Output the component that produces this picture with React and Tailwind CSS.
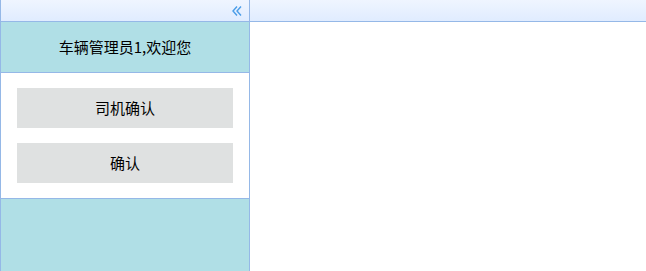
const font = { fontFamily: '"Microsoft YaHei", "Noto Sans CJK SC", sans-serif' }

const Collapse = () => (
  <svg width="12" height="12" viewBox="0 0 12 12" fill="none" stroke="#4a9de8" strokeWidth="1.4">
    <path d="M6 1.5 L2 6 L6 10.5" />
    <path d="M10 1.5 L6 6 L10 10.5" />
  </svg>
)

const App = () => {
  const actions = ['司机确认', '确认']

  return (
    <div className="flex h-[271px] w-[646px] overflow-hidden bg-white text-[15px] text-black" style={font}>
      <div className="flex w-[250px] flex-col border-x border-[#95B8E7]">
        <div className="flex h-[22px] shrink-0 items-center justify-end border-b border-[#95B8E7] bg-gradient-to-b from-[#EFF5FF] to-[#E0ECFF] pr-[6px]">
          <Collapse />
        </div>
        <div className="flex flex-1 flex-col bg-[#B0DFE6]">
          <div className="flex h-[50px] items-center justify-center">车辆管理员1,欢迎您</div>
          <div className="flex flex-col gap-[15px] border-y border-[#95B8E7] bg-white pb-[15px] pl-[16px] pt-[15px]">
            {actions.map((label) => (
              <button key={label} className="h-[40px] w-[216px] bg-[#DFE1E1] text-[15px]">
                {label}
              </button>
            ))}
          </div>
        </div>
      </div>
      <div className="flex flex-1 flex-col">
        <div className="h-[22px] shrink-0 border-b border-[#95B8E7] bg-gradient-to-b from-[#EFF5FF] to-[#E0ECFF]" />
        <div className="flex-1 bg-white" />
      </div>
    </div>
  )
}

export default App
